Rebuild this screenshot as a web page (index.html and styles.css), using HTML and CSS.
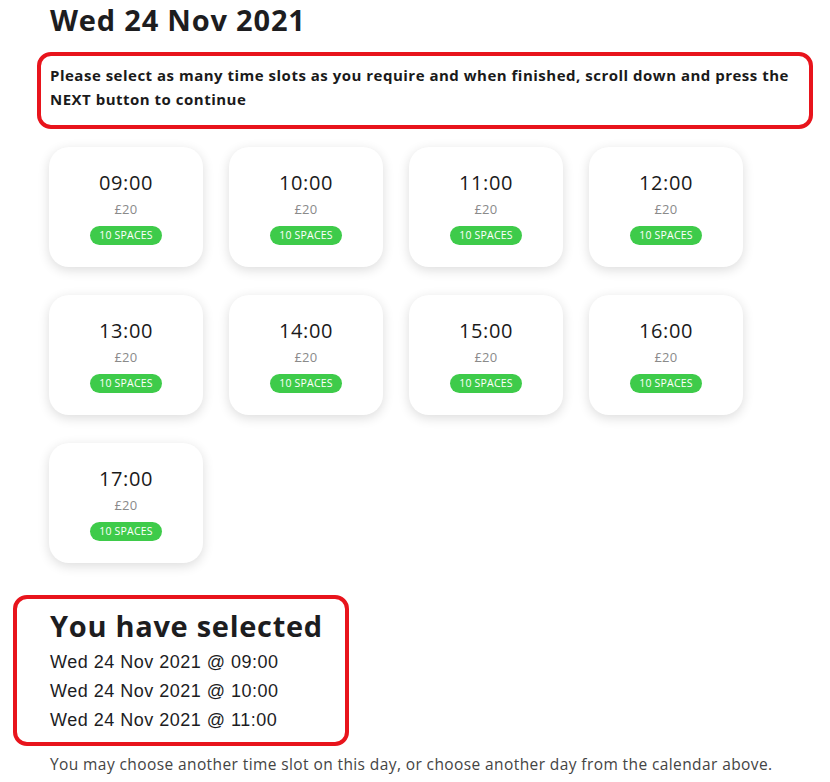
FILE: index.html
```html
<!DOCTYPE html>
<html lang="en">
<head>
    <meta charset="UTF-8">
    <meta name="viewport" content="width=device-width, initial-scale=1.0">
    <title>Book a time slot</title>
    <link rel="stylesheet" href="styles.css">
</head>
<body>
    <div class="page">
        <h1 class="day-title">Wed 24 Nov 2021</h1>

        <div class="notice">
            <p>Please select as many time slots as you require and when finished, scroll down and press the NEXT button to continue</p>
        </div>

        <div class="slots">
            <div class="slot"><span class="time">09:00</span><span class="price">£20</span><span class="spaces">10 Spaces</span></div>
            <div class="slot"><span class="time">10:00</span><span class="price">£20</span><span class="spaces">10 Spaces</span></div>
            <div class="slot"><span class="time">11:00</span><span class="price">£20</span><span class="spaces">10 Spaces</span></div>
            <div class="slot"><span class="time">12:00</span><span class="price">£20</span><span class="spaces">10 Spaces</span></div>
            <div class="slot"><span class="time">13:00</span><span class="price">£20</span><span class="spaces">10 Spaces</span></div>
            <div class="slot"><span class="time">14:00</span><span class="price">£20</span><span class="spaces">10 Spaces</span></div>
            <div class="slot"><span class="time">15:00</span><span class="price">£20</span><span class="spaces">10 Spaces</span></div>
            <div class="slot"><span class="time">16:00</span><span class="price">£20</span><span class="spaces">10 Spaces</span></div>
            <div class="slot"><span class="time">17:00</span><span class="price">£20</span><span class="spaces">10 Spaces</span></div>
        </div>

        <div class="selected">
            <h2>You have selected</h2>
            <ul>
                <li>Wed 24 Nov 2021 @ 09:00</li>
                <li>Wed 24 Nov 2021 @ 10:00</li>
                <li>Wed 24 Nov 2021 @ 11:00</li>
            </ul>
        </div>

        <p class="hint">You may choose another time slot on this day, or choose another day from the calendar above.</p>
    </div>
</body>
</html>
```

FILE: styles.css
```css
body {
    margin: 0;
    background: #fff;
    color: #1d1d1f;
    font-family: "Open Sans", "DejaVu Sans", sans-serif;
}
.day-title {
    margin: 0;
    padding: 2px 0 0 50px;
    font-size: 29px;
    line-height: 36px;
    font-weight: 700;
    letter-spacing: 0.8px;
}
.notice {
    margin: 14px 17px 0 37px;
    border: 4px solid #e8141c;
    border-radius: 14px;
    padding: 7px 9px 14px 9px;
}
.notice p {
    margin: 0;
    font-size: 15px;
    line-height: 24px;
    font-weight: 700;
    letter-spacing: 0.5px;
    color: #1a1a1a;
}
.slots {
    display: grid;
    grid-template-columns: repeat(4, 154px);
    column-gap: 26px;
    row-gap: 28px;
    padding: 18px 0 0 49px;
}
.slot {
    height: 120px;
    background: #fff;
    border-radius: 20px;
    box-shadow: 0 3px 12px rgba(0, 0, 0, 0.14);
    display: flex;
    flex-direction: column;
    align-items: center;
    padding-top: 23px;
    box-sizing: border-box;
}
.time {
    font-size: 20px;
    line-height: 26px;
    letter-spacing: 0.6px;
    color: #1a1a1a;
}
.price {
    font-size: 13px;
    line-height: 20px;
    letter-spacing: 0.3px;
    color: #8a8a8a;
    margin-top: 3px;
}
.spaces {
    margin-top: 7px;
    background: #3ecb4a;
    color: #fff;
    font-size: 10.5px;
    line-height: 19px;
    letter-spacing: 0.2px;
    padding: 0 9px;
    border-radius: 10px;
    text-transform: uppercase;
}
.selected {
    margin: 32px 0 0 13px;
    width: 336px;
    border: 4px solid #e8141c;
    border-radius: 14px;
    padding: 9px 0 7px 33px;
    box-sizing: border-box;
}
.selected h2 {
    margin: 0;
    font-size: 29px;
    line-height: 36px;
    font-weight: 700;
    letter-spacing: 0.7px;
}
.selected ul {
    list-style: none;
    margin: 4px 0 0;
    padding: 0;
}
.selected li {
    font-family: "Liberation Sans", Arial, sans-serif;
    font-size: 18px;
    line-height: 29px;
    letter-spacing: 0.5px;
    color: #1d1d1f;
}
.hint {
    margin: 8px 0 0 50px;
    font-size: 15.5px;
    line-height: 20px;
    letter-spacing: 0.4px;
    color: #444;
}
```
